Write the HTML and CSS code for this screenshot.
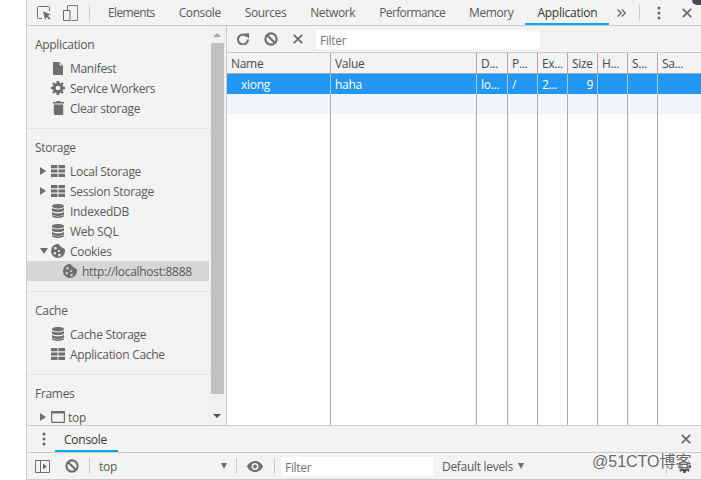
FILE: index.html
```html
<!DOCTYPE html>
<html lang="en">
<head>
<meta charset="utf-8">
<title>DevTools</title>
<link rel="stylesheet" href="styles.css">
</head>
<body>
<svg class="defs" width="0" height="0">
  <symbol id="i-grid" viewBox="0 0 14 12"><path d="M0 0h6.500v3.200H0zM7.500 0H14v3.200H7.500zM0 4.400h6.500v3.200H0zM7.500 4.400H14v3.200H7.500zM0 8.800h6.500V12H0zM7.500 8.800H14V12H7.500z"/></symbol>
  <symbol id="i-db" viewBox="0 0 12 14"><path d="M6 0c3.300 0 6 .9 6 2.200S9.300 4.400 6 4.400 0 3.500 0 2.200 2.700 0 6 0zM0 3.800C1 5 3.400 5.500 6 5.500s5-.5 6-1.700v2.100C12 7.200 9.300 8.100 6 8.100S0 7.200 0 5.900zM0 7.800C1 9 3.400 9.400 6 9.400s5-.4 6-1.600v2c0 1.300-2.700 2.200-6 2.200s-6-.9-6-2.200zM0 10.800C1 12 3.400 12.500 6 12.500s5-.5 6-1.700v1C12 13.100 9.300 14 6 14s-6-.9-6-2.200z"/></symbol>
  <symbol id="i-cookie" viewBox="0 0 14 14"><path fill-rule="evenodd" d="M7 0c.7 0 1.200.3 1.300 1 .2.900.9 1.300 1.700 1.200.4 1.100 1.200 1.600 2.200 1.500.2.800.9 1.200 1.700 1.300.1.600.1 1.300.1 2A7 7 0 1 1 7 0zM4.500 3a1.300 1.300 0 1 0 0 2.600 1.300 1.300 0 0 0 0-2.600zM3.800 8a1.200 1.200 0 1 0 0 2.400 1.200 1.200 0 0 0 0-2.400zM8 6a1.100 1.100 0 1 0 0 2.200A1.100 1.100 0 0 0 8 6zM8.500 9.800a1.300 1.300 0 1 0 0 2.600 1.300 1.300 0 0 0 0-2.600z"/></symbol>
  <symbol id="i-block" viewBox="0 0 14 14"><circle cx="7" cy="7" r="5.600" fill="none" stroke="currentColor" stroke-width="2.100"/><path d="M3 3l8 8" stroke="currentColor" stroke-width="2.100"/></symbol>
  <symbol id="i-x" viewBox="0 0 10 10"><path d="M.8.800l8.400 8.400M9.200.800L.8 9.200" fill="none" stroke="currentColor" stroke-width="1.900"/></symbol>
  <symbol id="i-dots" viewBox="0 0 4 14"><circle cx="2" cy="2" r="1.500"/><circle cx="2" cy="7" r="1.500"/><circle cx="2" cy="12" r="1.500"/></symbol>
</svg>

<div class="app">
  <header class="topbar">
    <svg class="ico ico-inspect" viewBox="0 0 14 14"><path d="M5 12.500H1.500a1 1 0 0 1-1-1v-10a1 1 0 0 1 1-1h10a1 1 0 0 1 1 1V5" fill="none" stroke="currentColor" stroke-width="1"/><path d="M6 5.500l8 3-3.300 1.300 2.800 2.800-1.200 1.200-2.800-2.800L8.200 14z"/></svg>
    <svg class="ico ico-device" viewBox="0 0 15 16"><path d="M4.500 5V1a.6.600 0 0 1 .6-.6h9a.6.600 0 0 1 .6.600v14a.6.600 0 0 1-.6.600H8" fill="none" stroke="currentColor"/><path d="M.5 5.500h6.500v10H.5z" fill="none" stroke="currentColor"/></svg>
    <span class="vsep sep-a"></span>
    <nav class="tabs">
      <span class="tab tab-tight">Elements</span>
      <span class="tab">Console</span>
      <span class="tab">Sources</span>
      <span class="tab">Network</span>
      <span class="tab tab-tight">Performance</span>
      <span class="tab">Memory</span>
      <span class="tab active">Application</span>
    </nav>
    <svg class="ico ico-more" viewBox="0 0 9 8"><path d="M.6.500L4 4 .6 7.500M4.800.500L8.200 4 4.800 7.500" fill="none" stroke="currentColor" stroke-width="1.500"/></svg>
    <span class="vsep sep-b"></span>
    <svg class="ico ico-dots"><use href="#i-dots"/></svg>
    <svg class="ico ico-close"><use href="#i-x"/></svg>
  </header>

  <main class="split">
    <aside class="sidebar">
      <div class="tree">
        <section class="group">
          <h2>Application</h2>
          <div class="row">
            <span class="tw"></span>
            <svg class="ti ti-file" viewBox="0 0 10 13"><path d="M0 0h6.200L10 3.800V13H0zM6.500 1v2.500H9z" fill-rule="evenodd"/></svg>
            <span>Manifest</span>
          </div>
          <div class="row">
            <span class="tw"></span>
            <svg class="ti" viewBox="0 0 14 14"><path fill-rule="evenodd" d="M5.700 0h2.600l.3 1.900 1.100.5L11.400 1.300l1.300 1.300-1.100 1.700.5 1.100 1.900.3v2.600l-1.900.3-.5 1.100 1.100 1.700-1.300 1.300-1.700-1.100-1.100.5-.3 1.900H5.700l-.3-1.900-1.100-.5-1.700 1.100-1.300-1.300 1.100-1.700-.5-1.100L0 8.300V5.700l1.900-.3.500-1.100L1.300 2.600l1.300-1.300 1.700 1.100 1.100-.5zM7 4.700a2.300 2.300 0 1 0 0 4.600 2.300 2.300 0 0 0 0-4.600z"/></svg>
            <span>Service Workers</span>
          </div>
          <div class="row">
            <span class="tw"></span>
            <svg class="ti ti-trash" viewBox="0 0 11 14"><path d="M0 1h3.500V0h4v1H11v1.500H0zM.8 3.500h9.400V13a1 1 0 0 1-1 1H1.800a1 1 0 0 1-1-1z"/></svg>
            <span>Clear storage</span>
          </div>
        </section>
        <section class="group">
          <h2>Storage</h2>
          <div class="row"><span class="tw tw-right"></span><svg class="ti"><use href="#i-grid"/></svg><span>Local Storage</span></div>
          <div class="row"><span class="tw tw-right"></span><svg class="ti"><use href="#i-grid"/></svg><span>Session Storage</span></div>
          <div class="row"><span class="tw"></span><svg class="ti ti-db"><use href="#i-db"/></svg><span>IndexedDB</span></div>
          <div class="row"><span class="tw"></span><svg class="ti ti-db"><use href="#i-db"/></svg><span>Web SQL</span></div>
          <div class="row"><span class="tw tw-down"></span><svg class="ti"><use href="#i-cookie"/></svg><span>Cookies</span></div>
          <div class="row row-child selected"><span class="tw"></span><svg class="ti"><use href="#i-cookie"/></svg><span>http://localhost:8888</span></div>
        </section>
        <section class="group">
          <h2>Cache</h2>
          <div class="row"><span class="tw"></span><svg class="ti ti-db"><use href="#i-db"/></svg><span>Cache Storage</span></div>
          <div class="row"><span class="tw"></span><svg class="ti"><use href="#i-grid"/></svg><span>Application Cache</span></div>
        </section>
        <section class="group group-last">
          <h2>Frames</h2>
          <div class="row row-frame">
            <span class="tw tw-right"></span>
            <svg class="ti" viewBox="0 0 14 12"><path fill-rule="evenodd" d="M1 0h12a1 1 0 0 1 1 1v10a1 1 0 0 1-1 1H1a1 1 0 0 1-1-1V1a1 1 0 0 1 1-1zm.2 2.600v8.200h11.600V2.600z"/></svg>
            <span>top</span>
          </div>
        </section>
      </div>
      <div class="scrollbar">
        <span class="arrow arrow-up"></span>
        <span class="thumb"></span>
        <span class="arrow arrow-down"></span>
      </div>
    </aside>

    <section class="content">
      <div class="filterbar">
        <svg class="ico ico-reload" viewBox="0 0 12 12"><path d="M10 3.500A5 5 0 1 0 11 6.500" fill="none" stroke="currentColor" stroke-width="2"/><path d="M7 0.500L12 0v5.200z" transform="translate(0 .3)"/></svg>
        <svg class="ico ico-block"><use href="#i-block"/></svg>
        <svg class="ico ico-clear"><use href="#i-x"/></svg>
        <span class="filter filter-top">Filter</span>
      </div>
      <div class="table">
        <div class="tr th">
          <span>Name</span><span>Value</span><span>D...</span><span>P...</span><span>Ex...</span><span>Size</span><span>H...</span><span>S...</span><span>Sa...</span>
        </div>
        <div class="tr td sel">
          <span class="indent">xiong</span><span>haha</span><span>lo...</span><span>/</span><span>2...</span><span class="num">9</span><span></span><span></span><span></span>
        </div>
        <div class="tr td alt">
          <span></span><span></span><span></span><span></span><span></span><span></span><span></span><span></span><span></span>
        </div>
        <div class="tr fill">
          <span></span><span></span><span></span><span></span><span></span><span></span><span></span><span></span><span></span>
        </div>
      </div>
    </section>
  </main>

  <footer class="drawer">
    <div class="drawer-tabs">
      <svg class="ico ico-dots2"><use href="#i-dots"/></svg>
      <span class="tab active dtab">Console</span>
      <svg class="ico ico-close2"><use href="#i-x"/></svg>
    </div>
    <div class="console-bar">
      <svg class="ico ico-side" viewBox="0 0 15 13"><path d="M.5.500h14v12H.5zM5.500.500v12" fill="none" stroke="currentColor"/><path d="M8 3.500l4 3-4 3z"/></svg>
      <svg class="ico ico-block2"><use href="#i-block"/></svg>
      <span class="vsep sep-c"></span>
      <span class="ctx">top</span>
      <span class="caret caret-ctx"></span>
      <span class="vsep sep-d"></span>
      <svg class="ico ico-eye" viewBox="0 0 16 11"><path fill-rule="evenodd" d="M8 0c3.500 0 6.500 2.300 8 5.500C14.500 8.700 11.500 11 8 11S1.500 8.700 0 5.500C1.500 2.300 4.500 0 8 0zm0 2a3.500 3.500 0 1 0 0 7 3.500 3.500 0 0 0 0-7zm0 1.600a1.900 1.900 0 1 1 0 3.800 1.900 1.900 0 0 1 0-3.800z"/></svg>
      <span class="vsep sep-e"></span>
      <span class="filter filter-console">Filter</span>
      <span class="levels">Default levels</span>
      <span class="caret caret-levels"></span>
      <span class="vsep sep-f"></span>
      <svg class="ico ico-gear" viewBox="0 0 14 14"><path fill-rule="evenodd" d="M5.700 0h2.600l.3 1.900 1.100.5L11.400 1.300l1.300 1.300-1.100 1.700.5 1.100 1.900.3v2.600l-1.900.3-.5 1.100 1.100 1.700-1.300 1.300-1.700-1.100-1.100.5-.3 1.900H5.700l-.3-1.900-1.100-.5-1.700 1.100-1.300-1.300 1.100-1.700-.5-1.100L0 8.300V5.700l1.900-.3.500-1.100L1.300 2.600l1.300-1.300 1.700 1.100 1.100-.5zM7 4.700a2.300 2.300 0 1 0 0 4.600 2.300 2.300 0 0 0 0-4.600z"/></svg>
    </div>
  </footer>
</div>

<div class="corner"></div>
<div class="watermark">@51CTO博客</div>
</body>
</html>
```

FILE: styles.css
```css
* { box-sizing: border-box; }
html, body { margin: 0; padding: 0; height: 480px; overflow: hidden; background: #fff; }
body {
  font-family: "Open Sans", "Noto Sans", sans-serif;
  font-size: 12px;
  letter-spacing: -0.3px;
  color: #5a5a5a;
  position: relative;
  width: 701px;
}
.defs { position: absolute; }
.app {
  margin-left: 26px;
  height: 480px;
  border-left: 1px solid #ccc;
  border-bottom: 1px solid #ccc;
  background: #f3f3f3;
  display: flex;
  flex-direction: column;
}
.ico { display: block; flex: none; fill: #6e6e6e; color: #6e6e6e; }
.vsep { flex: none; width: 1px; height: 16px; background: #ccc; }

/* Top bar */
.topbar {
  height: 26px;
  flex: none;
  display: flex;
  align-items: center;
  border-bottom: 1px solid #ccc;
  padding-left: 10px;
}
.ico-inspect { width: 14px; height: 14px; margin-right: 12px; }
.ico-device { width: 15px; height: 16px; }
.sep-a { margin-left: 11px; }
.tabs { display: flex; margin-left: 6px; height: 25px; }
.tab {
  display: flex;
  align-items: center;
  padding: 0 12px;
  height: 25px;
  white-space: nowrap;
  letter-spacing: -0.4px;
}
.tab-tight { letter-spacing: -0.62px; }
.tab.active { color: #333; border-bottom: 2px solid #03a9f4; padding-top: 2px; letter-spacing: -0.25px; }
.ico-more { width: 9px; height: 8px; margin-left: 8px; }
.sep-b { margin-left: 13px; }
.ico-dots { width: 4px; height: 14px; margin-left: 17px; fill: #666; }
.ico-close { width: 10px; height: 10px; margin-left: 21px; }

/* Split */
.split { flex: 1; min-height: 0; display: flex; }
.sidebar {
  width: 200px;
  flex: none;
  border-right: 1px solid #ccc;
  display: flex;
  overflow: hidden;
}
.tree { width: 182px; flex: none; overflow: hidden; }
.group { border-bottom: 1px solid #e4e4e4; padding: 9px 0 10px; }
.group-last { border-bottom: 0; padding-bottom: 0; }
.group h2 {
  margin: 0;
  font: inherit;
  line-height: 20px;
  height: 20px;
  padding-left: 8px;
  margin-bottom: 3px;
}
.row { display: flex; align-items: center; height: 20px; padding-left: 13px; white-space: nowrap; }
.tw { width: 9px; flex: none; }
.tw-right { width: 0; height: 0; border-left: 6px solid #6e6e6e; border-top: 4px solid transparent; border-bottom: 4px solid transparent; margin-right: 3px; }
.tw-down { width: 0; height: 0; border-top: 6px solid #6e6e6e; border-left: 4px solid transparent; border-right: 4px solid transparent; margin-right: 1px; }
.ti { width: 14px; height: 14px; flex: none; fill: #6e6e6e; margin: 0 5px 0 2px; }
.ti-file { width: 10px; height: 13px; margin: 0 7px 0 4px; }
.ti-trash { width: 11px; height: 14px; margin: 0 6px 0 4px; }
.ti-db { width: 12px; margin: 0 6px 0 3px; }
.row-child { padding-left: 25px; }
.selected { background: #d6d6d6; }
.row-frame { margin-top: 1px; }
.row-frame .ti { width: 14px; height: 12px; margin-right: 3px; }

/* Scrollbar */
.scrollbar { width: 17px; flex: none; position: relative; display: flex; flex-direction: column; align-items: center; background: #f1f1f1; }
.thumb { width: 13px; height: 351px; background: #c1c1c1; margin-left: -1px; }
.arrow { width: 0; height: 0; border-left: 4px solid transparent; border-right: 4px solid transparent; margin-left: -1px; }
.arrow-up { border-bottom: 4px solid #a3a3a3; margin-top: 7px; margin-bottom: 6px; }
.arrow-down { border-top: 4px solid #505050; margin-top: 20px; }

/* Content */
.content { flex: 1; min-width: 0; display: flex; flex-direction: column; background: #fff; }
.filterbar {
  height: 27px;
  flex: none;
  background: #f3f3f3;
  border-bottom: 1px solid #ccc;
  display: flex;
  align-items: center;
  padding-left: 10px;
}
.ico-reload { width: 12px; height: 12px; }
.ico-block { width: 14px; height: 14px; margin-left: 15px; }
.ico-clear { width: 10px; height: 10px; margin-left: 15px; }
.filter { display: flex; align-items: center; background: #fff; padding: 2px 0 0 4px; color: #757575; }
.filter-top { width: 224px; height: 19px; margin-left: 13px; margin-top: 1px; }
.table { flex: 1; min-height: 0; display: flex; flex-direction: column; }
.tr { display: grid; grid-template-columns: 104px 146px 31px 30px 30px 30px 30px 30px 44px; }
.tr > span {
  border-right: 1px solid #aaa;
  padding: 0 4px;
  white-space: nowrap;
  overflow: hidden;
  display: flex;
  align-items: center;
}
.tr > span:last-child { border-right: 0; }
.th { height: 21px; background: #f3f3f3; border-bottom: 1px solid #aaa; color: #4a4a4a; }
.td { height: 20px; }
.sel { background: #2196f3; color: #fff; }
.sel > span { border-right-color: #a9c9e8; }
.alt { background: #f0f5fd; }
.fill { flex: 1; }
.indent { padding-left: 14px !important; }
.num { justify-content: flex-end; }

/* Drawer */
.drawer { flex: none; border-top: 1px solid #ccc; }
.drawer-tabs {
  height: 27px;
  display: flex;
  align-items: center;
  border-bottom: 1px solid #ccc;
  padding-left: 15px;
}
.ico-dots2 { width: 4px; height: 14px; fill: #666; }
.dtab { margin-left: 9px; height: 26px; align-self: flex-start; padding: 2px 11px 0 9px; }
.ico-close2 { width: 10px; height: 10px; margin-left: auto; margin-right: 10px; }
.console-bar { height: 26px; display: flex; align-items: center; padding-left: 8px; }
.ico-side { width: 15px; height: 13px; }
.ico-block2 { width: 14px; height: 14px; margin-left: 15px; }
.sep-c { margin-left: 10px; }
.ctx { margin-left: 9px; width: 122px; padding-top: 1px; }
.caret { width: 0; height: 0; flex: none; border-top: 6px solid #6e6e6e; border-left: 3.500px solid transparent; border-right: 3.500px solid transparent; }
.sep-d { margin-left: 9px; }
.ico-eye { width: 16px; height: 11px; margin-left: 10px; }
.sep-e { margin-left: 11px; }
.filter-console { width: 152px; height: 19px; margin-left: 6px; }
.levels { margin-left: 9px; padding-top: 1px; }
.caret-levels { margin-left: 5px; }
.sep-f { margin-left: 142px; }
.ico-gear { width: 13px; height: 13px; margin-left: 11px; fill: #4c4c4c; }

/* Overlays */
.corner { position: absolute; top: -8px; right: -4px; width: 13px; height: 13px; border-radius: 5px; background: #4a4a55; }
.watermark {
  position: absolute;
  left: 592px;
  top: 452px;
  font-family: "Liberation Sans", "Noto Sans CJK SC", sans-serif;
  font-size: 16px;
  letter-spacing: 0;
  line-height: 20px;
  color: #666;
  text-shadow: 0 0 2px #fff, 0 0 2px #fff;
  white-space: nowrap;
}
```
